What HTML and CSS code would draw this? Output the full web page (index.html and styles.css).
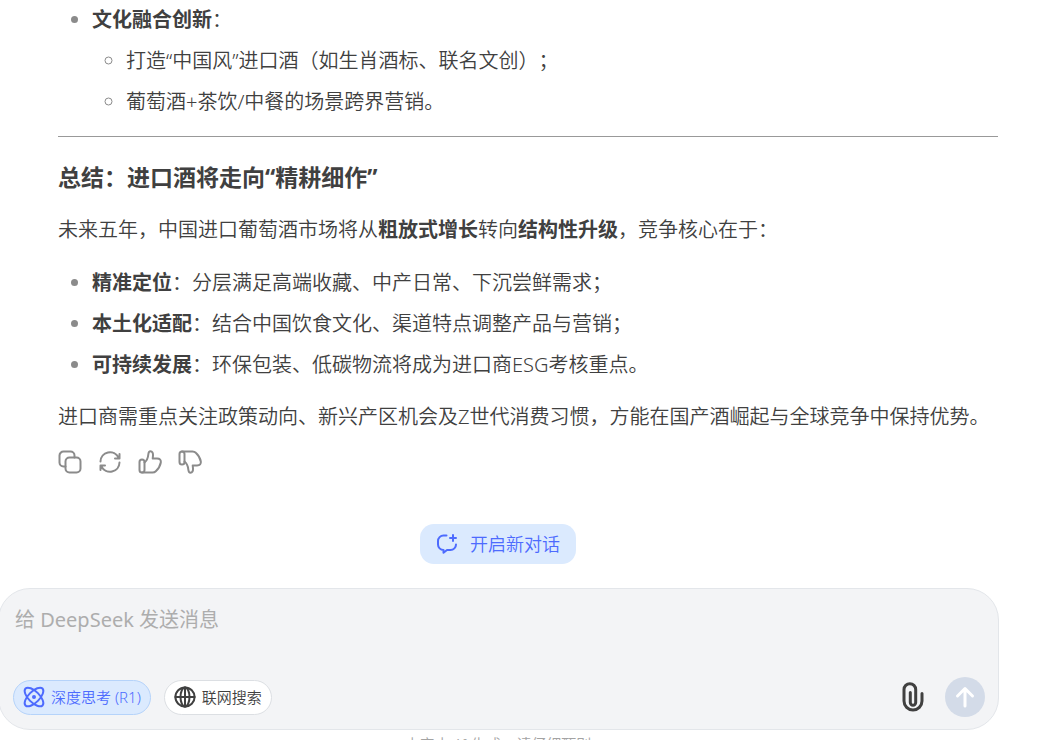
FILE: index.html
```html
<!DOCTYPE html>
<html lang="zh-CN">
<head>
<meta charset="utf-8">
<meta name="viewport" content="width=device-width, initial-scale=1">
<title>DeepSeek</title>
<link rel="stylesheet" href="styles.css">
</head>
<body>
<main class="chat">
  <article class="message">
    <ul class="list">
      <li><strong>文化融合创新</strong>：
        <ul class="list list-nested">
          <li>打造“中国风”进口酒（如生肖酒标、联名文创）；</li>
          <li>葡萄酒+茶饮/中餐的场景跨界营销。</li>
        </ul>
      </li>
    </ul>
    <hr class="divider">
    <h3 class="heading">总结：进口酒将走向“精耕细作”</h3>
    <p class="text">未来五年，中国进口葡萄酒市场将从<strong>粗放式增长</strong>转向<strong>结构性升级</strong>，竞争核心在于：</p>
    <ul class="list">
      <li><strong>精准定位</strong>：分层满足高端收藏、中产日常、下沉尝鲜需求；</li>
      <li><strong>本土化适配</strong>：结合中国饮食文化、渠道特点调整产品与营销；</li>
      <li><strong>可持续发展</strong>：环保包装、低碳物流将成为进口商ESG考核重点。</li>
    </ul>
    <p class="text">进口商需重点关注政策动向、新兴产区机会及Z世代消费习惯，方能在国产酒崛起与全球竞争中保持优势。</p>
    <div class="actions">
      <button class="icon-button" type="button" aria-label="复制">
        <svg viewBox="0 0 24 24"><rect x="7.500" y="7.500" width="15" height="15" rx="4"/><path d="M7.500 16.500H5.500a4 4 0 0 1-4-4v-7a4 4 0 0 1 4-4h7a4 4 0 0 1 4 4v2"/></svg>
      </button>
      <button class="icon-button" type="button" aria-label="重新生成">
        <svg viewBox="0 0 24 24"><path d="M2.500 11.500A9.500 9.500 0 0 1 20.500 7.500M21.500 4v4.500H17M21.500 12.500A9.500 9.500 0 0 1 3.500 16.500M2.500 20v-4.500H7"/></svg>
      </button>
      <button class="icon-button" type="button" aria-label="喜欢">
        <svg viewBox="0 0 24 24"><rect x="1.500" y="9.500" width="5" height="13" rx="2.500"/><path d="M6.500 12.500C9 10.500 10 8 10.300 4.500c.2-2 1-3.300 2.200-3.300 1.800 0 2.700 2 2.500 4.300L14.700 8.500H19c3 0 4.200 1.600 3.800 4-.6 3.500-2.600 6.500-5 8.700-1 1-2 1.300-3.300 1.300H4"/></svg>
      </button>
      <button class="icon-button" type="button" aria-label="不喜欢">
        <svg viewBox="0 0 24 24"><rect x="1.500" y="1.500" width="5" height="13" rx="2.500"/><path d="M6.500 11.500C9 13.500 10 16 10.300 19.500c.2 2 1 3.300 2.200 3.300 1.800 0 2.700-2 2.500-4.300L14.700 15.500H19c3 0 4.200-1.600 3.800-4-.6-3.500-2.600-6.500-5-8.700-1-1-2-1.300-3.300-1.300H4"/></svg>
      </button>
    </div>
  </article>

  <button class="new-chat" type="button">
    <svg viewBox="0 0 22 22"><path d="M10.500 2.500H7.500a5.500 5.500 0 0 0-5.500 5.500V11.500a5.500 5.500 0 0 0 5.500 5.500v2.800l3.500-2.800h3.500a5.500 5.500 0 0 0 5.500-5.500"/><path d="M17 2v6M14 5h6"/></svg>
    <span>开启新对话</span>
  </button>

  <form class="composer">
    <textarea class="prompt" rows="1" aria-label="给 DeepSeek 发送消息" placeholder="给 DeepSeek 发送消息"></textarea>
    <div class="toolbar">
      <button class="chip chip-active" type="button" aria-pressed="true">
        <svg viewBox="0 0 22 22"><ellipse cx="11" cy="11" rx="12" ry="5.500" transform="rotate(45 11 11)"/><ellipse cx="11" cy="11" rx="12" ry="5.500" transform="rotate(-45 11 11)"/><circle class="dot" cx="11" cy="11" r="2"/></svg>
        <span>深度思考 (R1)</span>
      </button>
      <button class="chip" type="button" aria-pressed="false">
        <svg viewBox="0 0 22 22"><circle cx="11" cy="11" r="9.600"/><ellipse cx="11" cy="11" rx="4.500" ry="9.600"/><path d="M1.400 11h19.200M11 1.400v19.200"/></svg>
        <span>联网搜索</span>
      </button>
      <button class="attach" type="button" aria-label="上传附件">
        <svg viewBox="0 0 22 30"><path d="M8.300 10.500V20.500a2.700 2.700 0 0 0 5.400 0V7.500a5.850 5.850 0 0 0-11.700 0V19a9 9 0 0 0 18 0v-7.500"/></svg>
      </button>
      <button class="send" type="submit" aria-label="发送">
        <svg viewBox="0 0 18 20"><path d="M9 19V2M1.500 9L9 1.500 16.500 9"/></svg>
      </button>
    </div>
  </form>
  <p class="notice">内容由 AI 生成，请仔细甄别</p>
</main>
</body>
</html>
```

FILE: styles.css
```css
* {
  box-sizing: border-box;
}

body {
  margin: 0;
  height: 100vh;
  overflow: hidden;
  background: #fff;
  color: #404040;
  font-family: "Noto Sans", "Noto Sans CJK SC", sans-serif;
  font-size: 20px;
  font-weight: 350;
  line-height: 35px;
  text-spacing-trim: space-all;
}

button,
textarea {
  margin: 0;
  padding: 0;
  border: 0;
  background: none;
  color: inherit;
  font: inherit;
}

svg {
  display: block;
  flex: none;
  overflow: visible;
  fill: none;
  stroke: currentColor;
  stroke-width: 2;
  stroke-linecap: round;
  stroke-linejoin: round;
}

strong {
  font-weight: 700;
}

.chat {
  display: flex;
  flex-direction: column;
  margin-left: -2px;
  padding: 2px 49px 0 0;
}

.message {
  padding-left: 60px;
}

.list {
  margin: 0;
  padding-left: 34px;
}

.list li + li,
.list-nested {
  margin-top: 6px;
}

.list li::marker {
  color: #8b8b8b;
}

.divider {
  height: 1px;
  margin: 17px 0 23px;
  border: 0;
  background: #999;
}

.heading {
  margin: 0 0 17px;
  font-size: 23px;
  font-weight: 700;
}

.text {
  margin: 0 0 18px;
}

.list + .text {
  margin: 17px 0 16px;
}

.actions {
  display: flex;
  gap: 16px;
}

.icon-button {
  width: 24px;
  height: 24px;
  color: #8b8b8b;
}

.icon-button svg {
  width: 24px;
  height: 24px;
}

.new-chat {
  display: flex;
  align-items: center;
  align-self: center;
  gap: 12px;
  height: 40px;
  margin: 50px 0 24px;
  padding: 0 16px;
  border-radius: 14px;
  background: #dbeafe;
  color: #4d6bfe;
  font-size: 18px;
}

.new-chat svg {
  width: 22px;
  height: 22px;
}

.composer {
  display: flex;
  flex-direction: column;
  justify-content: space-between;
  min-height: 142px;
  margin-right: -1px;
  padding: 13px 13px 12px 14px;
  border: 1px solid #e3e6ea;
  border-radius: 32px;
  background: #f3f4f6;
}

.prompt {
  display: block;
  width: 100%;
  height: 35px;
  padding-left: 2px;
  outline: 0;
  font-weight: 400;
  resize: none;
}

.prompt::placeholder {
  color: #adadad;
  opacity: 1;
}

.toolbar {
  display: flex;
  align-items: center;
  gap: 13px;
}

.chip {
  display: flex;
  align-items: center;
  gap: 6px;
  height: 35px;
  padding: 0 9px;
  border: 1px solid #dcdfe3;
  border-radius: 18px;
  background: #fff;
  font-size: 15px;
}

.chip svg {
  width: 22px;
  height: 22px;
}

.chip-active {
  border-color: #b5d3fa;
  background: #dbeafe;
  color: #4d6bfe;
}

.dot {
  fill: currentColor;
  stroke: none;
}

.attach {
  margin-left: auto;
}

.attach svg {
  width: 22px;
  height: 30px;
  stroke-width: 3;
}

.send {
  display: grid;
  place-items: center;
  width: 40px;
  height: 40px;
  margin-left: 8px;
  border-radius: 50%;
  background: #d3dbe8;
  color: #fff;
}

.send svg {
  width: 18px;
  height: 20px;
  stroke-width: 3;
}

.notice {
  margin: 2px 0 0;
  color: #a3a3a3;
  font-size: 15px;
  line-height: 24px;
  text-align: center;
}
```
